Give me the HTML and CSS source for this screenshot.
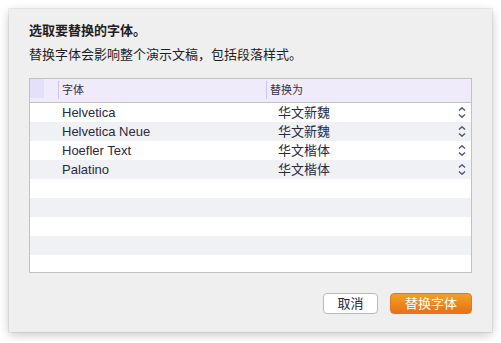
FILE: index.html
```html
<!DOCTYPE html>
<html lang="zh-CN">
  <head>
    <meta charset="UTF-8" />
    <meta name="viewport" content="width=device-width, initial-scale=1.0" />
    <title>替换字体</title>
    <link rel="stylesheet" href="styles.css">
  </head>
  <body>
    <div class="dialog">
      <p class="title">选取要替换的字体。</p>
      <p class="desc">替换字体会影响整个演示文稿，包括段落样式。</p>

      <div class="table">
        <div class="thead">
          <span class="corner"></span>
          <span class="th">字体</span>
          <span class="th">替换为</span>
        </div>
        <div class="tbody">
          <div class="row">
            <span></span>
            <span class="cell-font">Helvetica</span>
            <span class="cell-repl">华文新魏
              <svg class="stepper" viewBox="0 0 8 11"><path d="M1 3.5 4 0.8 7 3.5M1 7.5 4 10.2 7 7.5" /></svg>
            </span>
          </div>
          <div class="row">
            <span></span>
            <span class="cell-font">Helvetica Neue</span>
            <span class="cell-repl">华文新魏
              <svg class="stepper" viewBox="0 0 8 11"><path d="M1 3.5 4 0.8 7 3.5M1 7.5 4 10.2 7 7.5" /></svg>
            </span>
          </div>
          <div class="row">
            <span></span>
            <span class="cell-font">Hoefler Text</span>
            <span class="cell-repl">华文楷体
              <svg class="stepper" viewBox="0 0 8 11"><path d="M1 3.5 4 0.8 7 3.5M1 7.5 4 10.2 7 7.5" /></svg>
            </span>
          </div>
          <div class="row">
            <span></span>
            <span class="cell-font">Palatino</span>
            <span class="cell-repl">华文楷体
              <svg class="stepper" viewBox="0 0 8 11"><path d="M1 3.5 4 0.8 7 3.5M1 7.5 4 10.2 7 7.5" /></svg>
            </span>
          </div>
          <div class="row"></div>
          <div class="row"></div>
          <div class="row"></div>
          <div class="row"></div>
          <div class="row"></div>
        </div>
      </div>

      <div class="actions">
        <button class="btn">取消</button>
        <button class="btn btn-primary">替换字体</button>
      </div>
    </div>
  </body>
</html>
```

FILE: styles.css
```css
body {
  margin: 0;
  padding: 9px;
  background: #ffffff;
  font-family: "Liberation Sans", "Noto Sans CJK SC", sans-serif;
  color: #1e1e24;
}

.dialog {
  width: 483px;
  height: 323px;
  box-sizing: border-box;
  padding: 13px 20px 18px 20px;
  background: #efefef;
  box-shadow: 0 0 0 1px rgba(0, 0, 0, 0.06), 0 3px 10px rgba(0, 0, 0, 0.22);
  display: flex;
  flex-direction: column;
}

.title {
  margin: 0;
  font-size: 13px;
  line-height: 18px;
  font-weight: bold;
}

.desc {
  margin: 6px 0 0 0;
  font-size: 13px;
  line-height: 18px;
}

.table {
  margin-top: 14px;
  border: 1px solid #c2c2c2;
  background: #ffffff;
}

.thead {
  display: grid;
  grid-template-columns: 28px 208px 1fr;
  height: 23px;
  background: #efebfa;
  border-bottom: 1px solid #c2c2c2;
}

.corner {
  width: 14px;
  height: 19px;
  background: #e4e1f6;
}

.th {
  margin-top: 2px;
  height: 18px;
  line-height: 18px;
  padding-left: 3px;
  border-left: 1px solid #cbc6e4;
  font-size: 11px;
  color: #33324a;
}

.tbody {
  height: 169px;
  overflow: hidden;
}

.row {
  display: grid;
  grid-template-columns: 28px 208px 1fr;
  height: 19px;
  line-height: 19px;
  font-size: 13px;
  color: #2a2940;
}

.row:nth-child(even) {
  background: #f0f1f4;
}

.cell-font {
  padding-left: 4px;
}

.cell-repl {
  padding-left: 12px;
  padding-right: 5px;
  display: flex;
  align-items: center;
  justify-content: space-between;
}

.stepper {
  width: 8px;
  height: 11px;
  fill: none;
  stroke: #4e5078;
  stroke-width: 1.4;
}

.actions {
  margin-top: auto;
  display: flex;
  justify-content: flex-end;
  gap: 12px;
}

.btn {
  height: 21px;
  padding: 0;
  font-family: "Liberation Sans", "Noto Sans CJK SC", sans-serif;
  font-size: 13px;
  line-height: 19px;
  border-radius: 4px;
  border: 1px solid #b9b9c4;
  background: #ffffff;
  color: #25243c;
  width: 55px;
}

.btn-primary {
  width: 82px;
  border: 1px solid #e27a1c;
  background: linear-gradient(#f1a222, #e8701a);
  color: #ffffff;
}
```
